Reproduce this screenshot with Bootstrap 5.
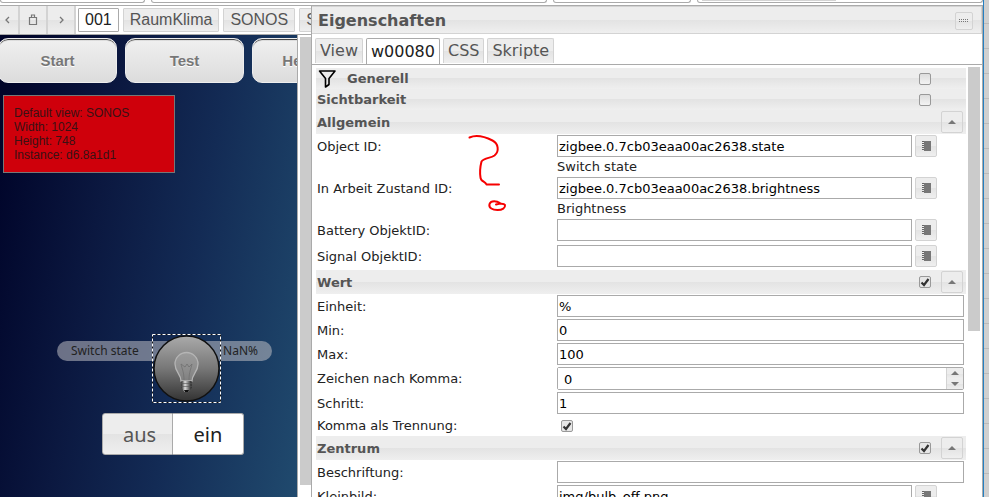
<!DOCTYPE html>
<html lang="de">
<head>
<meta charset="utf-8">
<meta name="viewport" content="width=device-width, initial-scale=1">
<title>Eigenschaften</title>
<link rel="stylesheet" href="https://cdn.jsdelivr.net/npm/bootstrap@5.3.0/dist/css/bootstrap.min.css">
<style>
:root{--line:#aaa;--soft:#d3d3d3;--glass:linear-gradient(#ededed 50%,#e3e3e3 50%,#efefef)}
body{font:13px/18px "DejaVu Sans",Verdana,sans-serif;color:#222;background:#fff}
button,input{font:inherit;color:inherit}
.arial{font-family:"Liberation Sans",Arial,sans-serif}
.top-strip{height:6px;border-bottom:1px solid var(--line);gap:6px}
.top-box{height:3px;border:solid var(--line);border-width:0 1px 1px;border-radius:0 0 3px 3px}
.top-handle{width:134px;height:1px;background:var(--soft)}
.stage{flex:0 0 311px;min-width:0}
.toolbar-row{height:29px;border-bottom:1px solid var(--line);gap:4px}
.tools{margin-right:-2px}
.tool{width:28px;height:28px;border:0;border-right:2px solid var(--soft);background:var(--glass);padding:0;color:#777}
.tool.first{width:20px}
.view-tab{height:24px;padding:0 6px;border:1px solid var(--soft);background:var(--glass);color:#555;font-size:16px;line-height:20px;border-radius:1px}
.view-tab.on{background:#fff;color:#212121;border-color:var(--line)}
.canvas-area{background:linear-gradient(100deg,#000429 4%,#0b1840 34%,#132b55 62%,#204a6e)}
.nav-pill{width:119px;height:45px;border:1px solid #eee;border-radius:10px;background:linear-gradient(#f0f0f0,#dcdcdc);box-shadow:inset 0 2px 1px -1px #333;color:#777;font:bold 15px "Liberation Sans",Arial,sans-serif;text-shadow:0 1px #fff}
.pill-row{left:-2px;top:3px;gap:8px}
.note{left:3px;top:60px;width:172px;padding:10px;border:1px solid #777;background:#cf000b;font-size:12px;line-height:14px;color:#3a1114}
.state-bar{left:57px;top:306px;width:215px;height:20px;border-radius:10px;background:rgba(190,190,195,.55);font-size:12px;padding:0 14px;font-family:"Noto Sans","DejaVu Sans",sans-serif}
.bulb-box{left:152px;top:299px;width:69px;height:69px}
.toggle{left:102px;top:378px;font-size:20px}
.toggle button{height:42px;width:71px;border:1px solid var(--line);background:var(--glass);color:#555;border-radius:3px 0 0 3px;padding:2px 0 0;font-family:"Noto Sans","DejaVu Sans",sans-serif}
.toggle button.on{background:#fff;color:#212121;border-radius:0 3px 3px 0;border-left:0}
.rail{width:14px;border-left:1px solid var(--line);padding:2px 0 12px 2px;background:#fff}
.thumb{background:#cbcbcb}
.props{min-width:0;border-left:1px solid var(--line);border-right:1px solid var(--line)}
.props-head{height:28px;border:1px solid var(--soft);border-left:0;background:var(--glass);padding:2px 8px 0 6px}
.props-head h1{font-size:16px;line-height:26px;font-weight:bold;color:#555}
.grip{width:18px;height:18px;border:1px solid var(--soft);border-radius:2px;background:var(--glass);padding:0;color:#777}
.prop-tabs{height:31px;padding:4px 3px 0;gap:3px;border-bottom:1px solid var(--line)}
.prop-tab{border:1px solid var(--soft);border-bottom:0;background:var(--glass);color:#555;font-size:16px;line-height:24px;height:25px;padding:0 4px;border-radius:2px 2px 0 0}
.prop-tab.on{background:#fff;color:#212121;border-color:var(--line);height:26px;padding:0 4px}
.scroll-zone{padding:2px 2px 0 4px;gap:2px;min-height:0}
.fields{min-width:0;margin-top:1px}
.group-bar{height:24px;background:var(--glass);padding:0 3px 0 1px;gap:10px}
.group-bar.slim{height:21px}
.group-bar h2{font-size:13px;line-height:18px;font-weight:bold;color:#555}
.group-bar:not(.slim) h2{padding-top:1px}
.fold-gap{width:22px}
.mini{flex:none;width:22px;height:22px;border:1px solid var(--soft);border-radius:2px;background:var(--glass);padding:0;color:#777}
.prop-row{padding:1px 2px 1px 1px}
.prop-row>label{flex:0 0 240px;line-height:20px;padding-top:2px}
.prop-row.roomy{padding-bottom:3px}
.prop-row input[type=text],.prop-row input[type=number]{height:22px;min-width:0;border:1px solid var(--line);border-radius:0;padding:1px 1px 0;background:#fff;color:#000}
.with-pick{padding-right:27px;gap:3px}
.hint{line-height:18px;padding-top:1px}
.tick-row{height:21px}
.spin-box{height:23px;border:1px solid var(--line);border-radius:2px}
.prop-row .spin-box input[type=number]{height:21px;border:0;padding:1px 6px 0;appearance:textfield;-moz-appearance:textfield}
.spin-box input::-webkit-inner-spin-button{display:none}
.spin-btn{width:17px;height:50%;border:0;border-left:1px solid var(--soft);background:var(--glass);padding:0;line-height:0;color:#777}
.tick{appearance:none;flex:none;width:12px;height:12px;margin:0;border:1px solid #999;border-radius:2px;background:linear-gradient(#ddd,#f3f3f3)}
.tick:checked{background:url("data:image/svg+xml,%3Csvg xmlns='http://www.w3.org/2000/svg' viewBox='0 0 10 10'%3E%3Cpath d='M1.5 5.5 4 8 8.500 2' fill='none' stroke='%23333' stroke-width='2.2'/%3E%3C/svg%3E"),#e6e6e6}
.rail-right{width:12px;padding-bottom:166px}
.edge{width:6px;border-left:1px solid #2580c3;background:repeating-linear-gradient(#d0d0d0 0 23px,#bbb 23px 24px,#d0d0d0 24px 25px)}
.scribble{left:466px;top:130px;width:42px;height:84px;pointer-events:none}
svg{display:block;margin:auto}
</style>
<script src="https://cdn.jsdelivr.net/npm/bootstrap@5.3.0/dist/js/bootstrap.bundle.min.js"></script>
</head>
<body class="vh-100 overflow-hidden d-flex position-relative">
<svg class="d-none"><defs>
<symbol id="book" viewBox="0 0 12 12"><path d="M4 1h7v10H4z" fill="#777"/><path d="M3 1v10" stroke="#666" stroke-width="2" stroke-dasharray="1 1"/></symbol>
<symbol id="up" viewBox="0 0 8 4"><path d="M0 4 4 0 8 4z" fill="#777"/></symbol>
<symbol id="down" viewBox="0 0 8 4"><path d="M0 0h8L4 4z" fill="#777"/></symbol>
</defs></svg>
<div class="d-flex flex-column flex-grow-1 overflow-hidden">
  <div class="top-strip d-flex flex-shrink-0">
    <div class="top-box" style="width:14.7%"></div><div class="top-box" style="width:40.3%"></div><div class="top-box" style="width:14.1%"></div>
    <div class="top-box flex-grow-1 px-1"><div class="top-handle"></div></div>
  </div>
  <div class="d-flex flex-grow-1 overflow-hidden">
    <main class="stage d-flex flex-column overflow-hidden">
      <div class="toolbar-row d-flex align-items-center flex-shrink-0 overflow-hidden arial">
        <div class="tools d-flex flex-shrink-0">
          <button class="tool first" aria-label="Zurück"><svg width="12" height="12" fill="none" stroke="currentColor" stroke-width="1.3"><path d="M6 3 3 6l3 3"/></svg></button>
          <button class="tool" aria-label="Einfügen"><svg width="12" height="12" fill="none" stroke="currentColor" stroke-width="1.2"><path d="M2.500 3.500h7v7h-7zM4.500 3V1h3v2"/></svg></button>
          <button class="tool" aria-label="Weiter"><svg width="12" height="12" fill="none" stroke="currentColor" stroke-width="1.3"><path d="m5 3 3 3-3 3"/></svg></button>
        </div>
        <button class="view-tab on flex-shrink-0">001</button>
        <button class="view-tab flex-shrink-0">RaumKlima</button>
        <button class="view-tab flex-shrink-0">SONOS</button>
        <button class="view-tab flex-shrink-0">S</button>
      </div>
      <div class="d-flex flex-grow-1">
        <div class="canvas-area position-relative flex-grow-1 overflow-hidden">
          <div class="pill-row position-absolute d-flex">
            <button class="nav-pill flex-shrink-0">Start</button><button class="nav-pill flex-shrink-0">Test</button><button class="nav-pill flex-shrink-0">Heizung</button>
          </div>
          <div class="note position-absolute arial">Default view: SONOS<br>Width: 1024<br>Height: 748<br>Instance: d6.8a1d1</div>
          <div class="state-bar position-absolute d-flex justify-content-between align-items-center"><span>Switch state</span><span>NaN%</span></div>
          <svg class="bulb-box position-absolute" viewBox="0 0 69 69" fill="none">
            <defs><linearGradient id="disc" x2="0" y2="1"><stop stop-color="#aaa"/><stop offset=".5" stop-color="#777"/><stop offset="1" stop-color="#333"/></linearGradient>
            <linearGradient id="cap"><stop stop-color="#333"/><stop offset=".35" stop-color="#ddd"/><stop offset="1" stop-color="#222"/></linearGradient></defs>
            <circle cx="34.5" cy="34.5" r="32.5" fill="url(#disc)" stroke="#111" stroke-width="1.5"/>
            <path d="M29 47c0-7-6-9-6-17a11.500 11.500 0 0 1 23 0c0 8-6 10-6 17z" fill="#aaa" fill-opacity=".45" stroke="#b5b5b5" stroke-width="1.3"/>
            <path d="M32 46c0-8-2-11-3-16l4 3 2-3 2 3 3-3c-1 5-3 8-3 16" stroke="#707070" stroke-width=".8"/>
            <path d="M29.500 47h10v7l-3 4h-4l-3-4z" fill="url(#cap)"/><path d="M29 49.500h11M29 52.500h11" stroke="#555" stroke-width=".6"/><path d="M32 56h5l-1 2h-3z" fill="#111"/>
            <path d="M.5.5h68v68H.5z" stroke="#111"/><path d="M.5.5h68v68H.5z" stroke="#fff" stroke-dasharray="3 2"/>
          </svg>
          <div class="toggle position-absolute d-flex"><button class="ps-1">aus</button><button class="on">ein</button></div>
        </div>
        <div class="rail d-flex"><div class="thumb flex-grow-1"></div></div>
      </div>
    </main>
    <section class="props d-flex flex-column flex-grow-1 overflow-hidden">
      <header class="props-head d-flex align-items-center justify-content-between flex-shrink-0"><h1 class="m-0">Eigenschaften</h1>
        <button class="grip" aria-label="Verschieben"><svg width="10" height="4"><path d="M0 .5h10M0 2.500h10" stroke="currentColor" stroke-dasharray="1 1"/></svg></button></header>
      <div class="prop-tabs d-flex flex-shrink-0" role="tablist">
        <button class="prop-tab" role="tab">View</button><button class="prop-tab on" role="tab" aria-selected="true">w00080</button><button class="prop-tab" role="tab">CSS</button><button class="prop-tab" role="tab">Skripte</button>
      </div>
      <div class="scroll-zone d-flex flex-grow-1 overflow-hidden">
        <form class="fields flex-grow-1">
          <div class="group-bar slim d-flex align-items-center">
            <svg class="m-0" width="20" height="20" viewBox="0 0 20 20" fill="none" stroke="#000" stroke-width="1.6" stroke-linejoin="round"><path d="M2.500 2h15.500l-6 7.500v6L8.500 18V9.500z"/></svg>
            <h2 class="m-0 flex-grow-1">Generell</h2><input class="tick" type="checkbox" aria-label="Generell"><span class="fold-gap"></span></div>
          <div class="group-bar slim d-flex align-items-center"><h2 class="m-0 flex-grow-1">Sichtbarkeit</h2><input class="tick" type="checkbox" aria-label="Sichtbarkeit"><span class="fold-gap"></span></div>
          <div class="group-bar d-flex align-items-center"><h2 class="m-0 flex-grow-1">Allgemein</h2><button type="button" class="mini" aria-label="Einklappen"><svg width="8" height="4"><use href="#up"/></svg></button></div>

          <div class="prop-row d-flex pb-0"><label for="oid">Object ID:</label><div class="flex-grow-1"><div class="d-flex with-pick"><input class="flex-grow-1" id="oid" type="text" value="zigbee.0.7cb03eaa00ac2638.state"><button type="button" class="mini" aria-label="Auswählen"><svg width="12" height="12"><use href="#book"/></svg></button></div><div class="hint">Switch state</div></div></div>
          <div class="prop-row d-flex pb-0"><label for="wid">In Arbeit Zustand ID:</label><div class="flex-grow-1"><div class="d-flex with-pick"><input class="flex-grow-1" id="wid" type="text" value="zigbee.0.7cb03eaa00ac2638.brightness"><button type="button" class="mini" aria-label="Auswählen"><svg width="12" height="12"><use href="#book"/></svg></button></div><div class="hint">Brightness</div></div></div>
          <div class="prop-row roomy d-flex"><label for="bat">Battery ObjektID:</label><div class="flex-grow-1 d-flex with-pick"><input class="flex-grow-1" id="bat" type="text"><button type="button" class="mini" aria-label="Auswählen"><svg width="12" height="12"><use href="#book"/></svg></button></div></div>
          <div class="prop-row roomy d-flex"><label for="sig">Signal ObjektID:</label><div class="flex-grow-1 d-flex with-pick"><input class="flex-grow-1" id="sig" type="text"><button type="button" class="mini" aria-label="Auswählen"><svg width="12" height="12"><use href="#book"/></svg></button></div></div>

          <div class="group-bar d-flex align-items-center"><h2 class="m-0 flex-grow-1">Wert</h2><input class="tick" type="checkbox" checked aria-label="Wert"><button type="button" class="mini" aria-label="Einklappen"><svg width="8" height="4"><use href="#up"/></svg></button></div>
          <div class="prop-row d-flex"><label for="unit">Einheit:</label><input class="flex-grow-1" id="unit" type="text" value="%"></div>
          <div class="prop-row d-flex"><label for="min">Min:</label><input class="flex-grow-1" id="min" type="text" value="0"></div>
          <div class="prop-row d-flex"><label for="max">Max:</label><input class="flex-grow-1" id="max" type="text" value="100"></div>
          <div class="prop-row d-flex"><label for="dig">Zeichen nach Komma:</label><div class="spin-box d-flex flex-grow-1"><input class="flex-grow-1" id="dig" type="number" value="0"><div class="d-flex flex-column"><button type="button" class="spin-btn" aria-label="Mehr"><svg width="8" height="4"><use href="#up"/></svg></button><button type="button" class="spin-btn" aria-label="Weniger"><svg width="8" height="4"><use href="#down"/></svg></button></div></div></div>
          <div class="prop-row d-flex"><label for="step">Schritt:</label><input class="flex-grow-1" id="step" type="text" value="1"></div>
          <div class="prop-row tick-row d-flex align-items-center"><label class="pt-0" for="comma">Komma als Trennung:</label><input class="tick ms-1" id="comma" type="checkbox" checked></div>

          <div class="group-bar d-flex align-items-center"><h2 class="m-0 flex-grow-1">Zentrum</h2><input class="tick" type="checkbox" checked aria-label="Zentrum"><button type="button" class="mini" aria-label="Einklappen"><svg width="8" height="4"><use href="#up"/></svg></button></div>
          <div class="prop-row d-flex"><label for="cap-text">Beschriftung:</label><input class="flex-grow-1" id="cap-text" type="text"></div>
          <div class="prop-row d-flex"><label for="thumb-img">Kleinbild:</label><div class="flex-grow-1 d-flex with-pick"><input class="flex-grow-1" id="thumb-img" type="text" value="img/bulb_off.png"><button type="button" class="mini" aria-label="Auswählen"><svg width="12" height="12"><use href="#book"/></svg></button></div></div>
        </form>
        <div class="rail-right d-flex flex-shrink-0"><div class="thumb flex-grow-1"></div></div>
      </div>
    </section>
  </div>
</div>
<div class="edge flex-shrink-0"></div>
<svg class="scribble position-absolute" viewBox="466 130 42 84" fill="none" stroke="#f60000" stroke-width="2" stroke-linecap="round" stroke-linejoin="round"><path d="M469.500 137.500c7-3 17 0 23 3 6 3 7 11 2 15-4 3-10 2-13 6-1 4-2 10-1 16 0 4 5 4 6 7h12.500"/><path d="M500 203c-3-2-9-3-10.500 1-1 4 3 6 8 6 5 0 8-2 7.500-5-1-2-4-1-5-1.500l-4 1"/></svg>
</body>
</html>
